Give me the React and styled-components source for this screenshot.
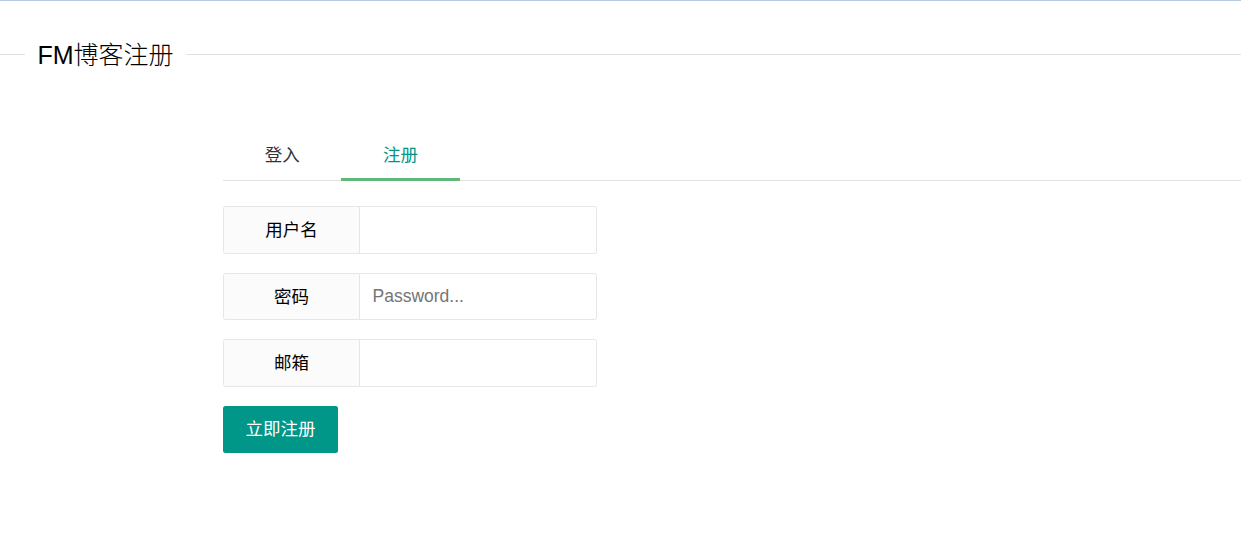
import React, { useState } from "react";
import styled, { createGlobalStyle } from "styled-components";

const GlobalStyle = createGlobalStyle`
  html, body {
    margin: 0;
    padding: 0;
    background: #ffffff;
  }
  body {
    font-family: "Liberation Sans", "Noto Sans CJK SC", Arial, sans-serif;
    font-size: 17.5px;
    line-height: 30px;
    color: #333333;
  }
  * {
    box-sizing: border-box;
  }
`;

const Page = styled.div`
  border-top: 1px solid #b9c9dd;
  min-height: 549px;
`;

const FieldTitle = styled.div`
  display: flex;
  align-items: center;
  height: 30px;
  margin-top: 38px;
`;

const TitleLine = styled.div`
  height: 1px;
  background: #e2e2e2;
  width: ${(p) => (p.$grow ? "auto" : "25px")};
  flex: ${(p) => (p.$grow ? "1" : "none")};
`;

const Legend = styled.h2`
  margin: 0;
  padding: 0 12.5px;
  font-size: 25px;
  font-weight: 300;
  line-height: 30px;
  color: #000000;
  position: relative;
  top: 1px;
`;

const TabBox = styled.div`
  margin: 61px 0 0 223px;
`;

const TabTitle = styled.ul`
  display: flex;
  margin: 0;
  padding: 0;
  list-style: none;
  height: 51px;
  border-bottom: 1px solid #e2e2e2;
`;

const TabItem = styled.li`
  position: relative;
  width: 118.4px;
  height: 50px;
  line-height: 50px;
  text-align: center;
  font-size: 17.5px;
  cursor: pointer;
  color: ${(p) => (p.$active ? "#009688" : "#333333")};

  &::after {
    content: "";
    display: ${(p) => (p.$active ? "block" : "none")};
    position: absolute;
    left: 0;
    right: 0;
    bottom: -1px;
    height: 3px;
    background: #5fb878;
  }
`;

const Form = styled.form`
  padding-top: 25px;
`;

const FormItem = styled.div`
  display: flex;
  margin-bottom: 19px;
`;

const Label = styled.label`
  width: 137px;
  height: 47.5px;
  line-height: 46.5px;
  text-align: center;
  background: #fbfbfb;
  border: 1px solid #e6e6e6;
  border-radius: 2.5px 0 0 2.5px;
  color: #000000;
  font-size: 17.5px;
`;

const Input = styled.input`
  width: 237.5px;
  height: 47.5px;
  margin-left: -1px;
  padding: 0 12.5px;
  border: 1px solid #e6e6e6;
  border-radius: 0 2.5px 2.5px 0;
  background: #ffffff;
  font-family: "Liberation Sans", "Noto Sans CJK SC", Arial, sans-serif;
  font-size: 17.5px;
  color: #333333;
  outline: none;

  &::placeholder {
    color: #757575;
  }
`;

const SubmitButton = styled.button`
  display: block;
  height: 47.5px;
  padding: 0 22.5px 3px;
  border: none;
  border-radius: 2.5px;
  background: #009688;
  color: #ffffff;
  font-family: "Liberation Sans", "Noto Sans CJK SC", Arial, sans-serif;
  font-size: 17.5px;
  cursor: pointer;
`;

const fields = [
  { label: "用户名", type: "text", placeholder: "" },
  { label: "密码", type: "password", placeholder: "Password..." },
  { label: "邮箱", type: "email", placeholder: "" },
];

const App = () => {
  const [tab, setTab] = useState(1);
  return (
    <Page>
      <GlobalStyle />
      <FieldTitle>
        <TitleLine />
        <Legend>FM博客注册</Legend>
        <TitleLine $grow />
      </FieldTitle>
      <TabBox>
        <TabTitle>
          <TabItem $active={tab === 0} onClick={() => setTab(0)}>
            登入
          </TabItem>
          <TabItem $active={tab === 1} onClick={() => setTab(1)}>
            注册
          </TabItem>
        </TabTitle>
        <Form onSubmit={(e) => e.preventDefault()}>
          {fields.map((f) => (
            <FormItem key={f.label}>
              <Label>{f.label}</Label>
              <Input type={f.type} placeholder={f.placeholder} />
            </FormItem>
          ))}
          <SubmitButton type="submit">立即注册</SubmitButton>
        </Form>
      </TabBox>
    </Page>
  );
};

export default App;
